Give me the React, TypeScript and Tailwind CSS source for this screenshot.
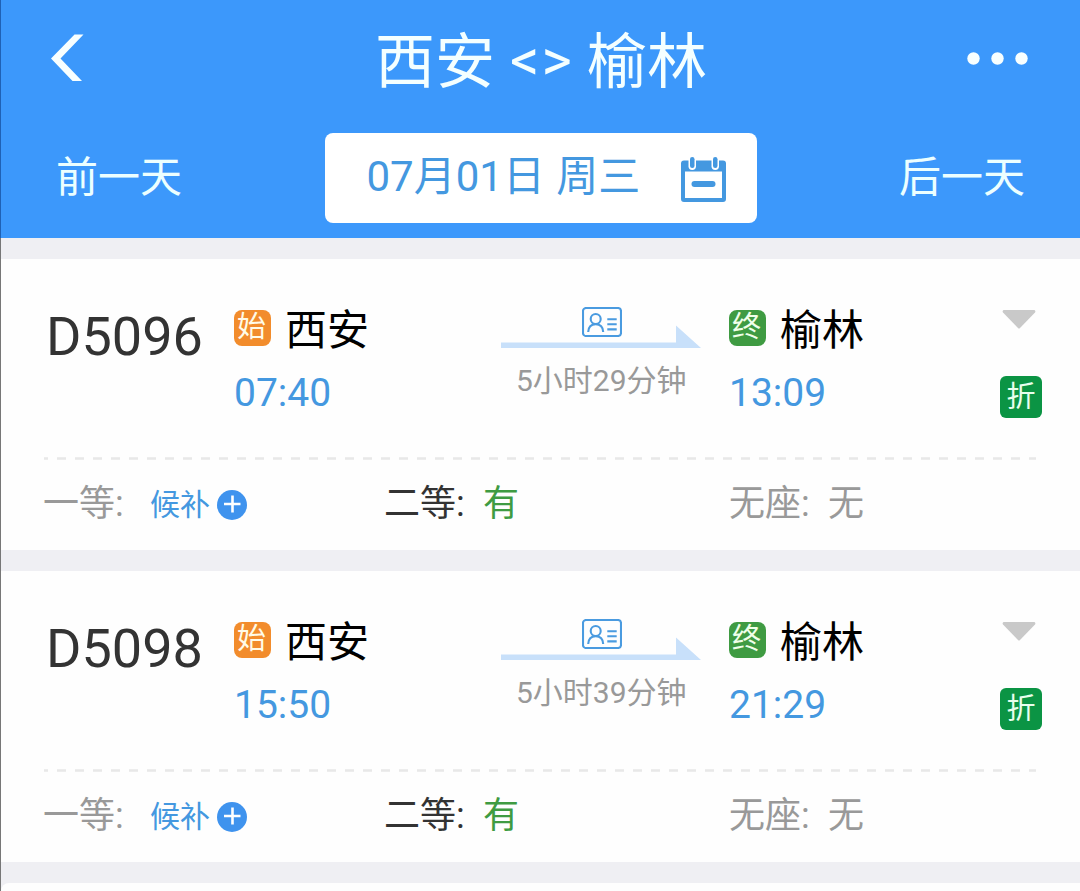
import React from "react";

type Train = {
  no: string;
  depart: string;
  arrive: string;
  duration: string;
};

const trains: Train[] = [
  { no: "D5096", depart: "07:40", arrive: "13:09", duration: "5小时29分钟" },
  { no: "D5098", depart: "15:50", arrive: "21:29", duration: "5小时39分钟" },
];

function CalendarIcon() {
  return (
    <svg width="46" height="46" viewBox="0 0 46 46" className="block">
      <path
        fillRule="evenodd"
        fill="#4498e0"
        d="M3 3.5H42Q45 3.5 45 6.5V42Q45 45 42 45H3Q0 45 0 42V6.5Q0 3.5 3 3.5ZM4 14.5V41H41V14.5Z"
      />
      <rect x="7.5" y="-3" width="7.5" height="16" rx="3.7" fill="#fff" />
      <rect x="30.5" y="-3" width="7.5" height="16" rx="3.7" fill="#fff" />
      <rect x="9" y="0" width="4.5" height="11" rx="2.2" fill="#4498e0" />
      <rect x="32" y="0" width="4.5" height="11" rx="2.2" fill="#4498e0" />
      <rect x="10.5" y="24" width="24" height="6" rx="3" fill="#4498e0" />
    </svg>
  );
}

function IdCardIcon() {
  return (
    <svg width="40" height="30" viewBox="0 0 40 30" fill="none" stroke="#4a9be0" strokeWidth="2.1" className="block">
      <rect x="1" y="1" width="38" height="28" rx="3" />
      <circle cx="13.7" cy="12" r="5" />
      <path d="M6.2 25C6.4 20 9 17.2 13.7 17.2S21 20 21.2 25" />
      <path d="M25.3 12.3H34.7M25.3 17.2H34.7M25.3 22.4H34.7" />
    </svg>
  );
}

function TrainCard({ train }: { train: Train }) {
  return (
    <section className="h-[291px] bg-[#fefefe]">
      <div className="ml-[43px] grid h-[198px] grid-cols-[190px_267px_228px_271px_42px]">
        <div className="pl-[2px] pt-[46px] text-[54px] leading-[64px] text-[#333]">{train.no}</div>
        <div className="pt-[44px]">
          <div className="flex h-[52px]">
            <span className="mt-[7px] h-9 w-[37px] rounded-lg bg-[#f28c2c] pr-[2px] text-center text-[29px] leading-[34px] text-[#fffbe8]">始</span>
            <span className="ml-[14px] pt-[2px] text-[42px] leading-[52px] text-black">西安</span>
          </div>
          <div className="mt-[15px] text-[39px] leading-[46px] text-[#4498e0]">{train.depart}</div>
        </div>
        <div className="w-[201px] pt-12">
          <div className="ml-[81px] h-[18px] w-10">
            <IdCardIcon />
          </div>
          <svg width="201" height="24" viewBox="0 0 201 24" className="block">
            <path d="M0 17.5H175V0.5L200 23H0Z" fill="#c8e0fa" />
          </svg>
          <div className="mt-[12px] whitespace-nowrap pl-[15px] text-[30px] leading-[40px] text-[#999]">{train.duration}</div>
        </div>
        <div className="pt-[44px]">
          <div className="flex h-[52px]">
            <span className="mt-[7px] h-9 w-[37px] rounded-lg bg-[#3f9b42] pr-[2px] text-center text-[29px] leading-[34px] text-[#f0ffe9]">终</span>
            <span className="ml-[14px] pt-[2px] text-[42px] leading-[52px] text-black">榆林</span>
          </div>
          <div className="mt-[15px] text-[39px] leading-[46px] text-[#4498e0]">{train.arrive}</div>
        </div>
        <div className="flex flex-col items-center pt-[51px]">
          <svg width="34" height="19" viewBox="0 0 34 19" className="-ml-[5px] block">
            <path d="M1.5 0H32.5Q34 1 33 2.5L18 18Q17 19 16 18L1 2.5Q0 1 1.5 0Z" fill="#c9c9c9" />
          </svg>
          <span className="mt-[47px] h-[42px] w-[42px] rounded-md bg-[#0b9444] text-center text-[29px] leading-[42px] text-[#e8ffee]">折</span>
        </div>
      </div>
      <svg width="992" height="3" viewBox="0 0 992 3" className="ml-[43px] block">
        <path d="M0 1.5H992" stroke="#e8e8e8" strokeWidth="2.4" strokeDasharray="9 9" strokeDashoffset="5" />
      </svg>
      <div className="ml-[42px] grid grid-cols-[341px_345px_1fr] pt-[20px] text-[36px] leading-[48px]">
        <div className="flex text-[#999]">
          <span className="w-[107px]">一等:</span>
          <span className="pt-[1px] text-[30px] text-[#4498e0]">候补</span>
          <svg width="30" height="30" viewBox="0 0 30 30" className="ml-[7px] mt-[10px] block">
            <circle cx="15" cy="15" r="15" fill="#3f93ee" />
            <path d="M7 14H23.5M15.5 5.5V22.5" stroke="#fff" strokeWidth="2.6" />
          </svg>
        </div>
        <div className="flex text-[#333]">
          <span className="w-[99px]">二等:</span>
          <span className="text-[#3f9b42]">有</span>
        </div>
        <div className="flex text-[#999]">
          <span className="w-[99px]">无座:</span>
          <span>无</span>
        </div>
      </div>
    </section>
  );
}

export default function App() {
  return (
    <main className="h-[891px] w-[1080px] overflow-hidden bg-[#efeff3] font-['Roboto','Noto_Sans_CJK_SC',sans-serif]">
      <header className="h-[238px] border-l border-[#1f61b5] bg-[#3c98fb] text-white">
        <div className="flex h-[133px] pl-[49px]">
          <svg width="34" height="48" viewBox="0 0 34 48" className="mt-[34px] block">
            <path d="M24.5 0.5H33.5L10.5 24.5L32 47H22.5L1 24.5Z" fill="#f8ffff" />
          </svg>
          <h1 className="ml-[291px] flex w-[332px] pt-[28px] text-[60px] leading-[70px] text-[#f4ffff]">
            <span>西安</span>
            <span className="-mt-[3px] w-[92px] pl-[2px] text-center text-[58px] tracking-[2px]">&lt;&gt;</span>
            <span>榆林</span>
          </h1>
          <svg width="62" height="14" viewBox="0 0 62 14" className="ml-[260px] mt-[52px] block" fill="#f8ffff">
            <circle cx="6.5" cy="6.5" r="6.2" />
            <circle cx="30.5" cy="6.5" r="6.2" />
            <circle cx="54.5" cy="6.5" r="6.2" />
          </svg>
        </div>
        <div className="flex justify-between pl-[55px] pr-[55px] text-[42px] leading-[52px] text-[#ecffff]">
          <span className="pt-[19px]">前一天</span>
          <div className="flex h-[90px] w-[432px] rounded-lg bg-white pl-[42px] text-[#4498e0]">
            <span className="w-[314px] whitespace-nowrap pt-[18px] [word-spacing:1px]">07月01日 周三</span>
            <span className="pt-6">
              <CalendarIcon />
            </span>
          </div>
          <span className="pt-[19px]">后一天</span>
        </div>
      </header>
      <div className="flex h-[653px] flex-col gap-[21px] border-l border-[#777] pt-[21px]">
        {trains.map((t) => (
          <TrainCard key={t.no} train={t} />
        ))}
        <div className="h-2 rounded-tl-lg bg-[#fefefe]" />
      </div>
    </main>
  );
}
